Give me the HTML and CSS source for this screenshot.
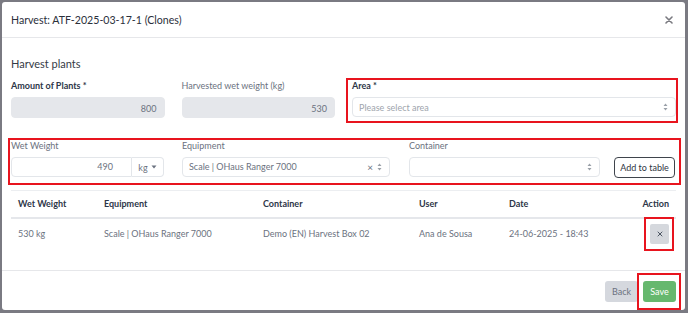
FILE: index.html
```html
<!DOCTYPE html>
<html>
<head>
<meta charset="utf-8">
<link rel="stylesheet" href="styles.css">
</head>
<body>
<div class="modal">
  <div class="modal-header">
    <h1 class="title">Harvest: ATF-2025-03-17-1 (Clones)</h1>
    <button class="close" aria-label="Close">
      <svg width="8" height="8" viewBox="0 0 8 8"><path d="M1 1L7 7M7 1L1 7" stroke="#7a7a80" stroke-width="1.6" stroke-linecap="round"/></svg>
    </button>
  </div>
  <div class="modal-body">
    <h2 class="section">Harvest plants</h2>
    <div class="row1">
      <div class="field">
        <label class="lbl strong">Amount of Plants *</label>
        <div class="input disabled">800</div>
      </div>
      <div class="field">
        <label class="lbl">Harvested wet weight (kg)</label>
        <div class="input disabled">530</div>
      </div>
      <div class="field span2">
        <label class="lbl strong">Area *</label>
        <div class="select placeholder">
          <span>Please select area</span>
          <svg class="updown" width="5" height="8" viewBox="0 0 5 8"><path d="M2.5 0.5L4.5 3H0.5Z M2.5 7.5L4.5 5H0.5Z" fill="#9aa0a8"/></svg>
        </div>
      </div>
    </div>
    <div class="row2">
      <div class="field f-wet">
        <label class="lbl">Wet Weight</label>
        <div class="group">
          <div class="input num">490</div>
          <div class="unit">kg <svg width="6" height="4" viewBox="0 0 6 4"><path d="M0.5 0.5H5.5L3 3.5Z" fill="#6b7280"/></svg></div>
        </div>
      </div>
      <div class="field f-eq">
        <label class="lbl">Equipment</label>
        <div class="select">
          <span>Scale | OHaus Ranger 7000</span>
          <span class="tools"><span class="clear">×</span><svg class="updown" width="5" height="8" viewBox="0 0 5 8"><path d="M2.5 0.5L4.5 3H0.5Z M2.5 7.5L4.5 5H0.5Z" fill="#9aa0a8"/></svg></span>
        </div>
      </div>
      <div class="field f-cont">
        <label class="lbl">Container</label>
        <div class="select">
          <span></span>
          <svg class="updown" width="5" height="8" viewBox="0 0 5 8"><path d="M2.5 0.5L4.5 3H0.5Z M2.5 7.5L4.5 5H0.5Z" fill="#9aa0a8"/></svg>
        </div>
      </div>
      <button class="btn-add">Add to table</button>
    </div>
    <table class="tbl">
      <thead>
        <tr>
          <th class="c1">Wet Weight</th>
          <th class="c2">Equipment</th>
          <th class="c3">Container</th>
          <th class="c4">User</th>
          <th class="c5">Date</th>
          <th class="c6">Action</th>
        </tr>
      </thead>
      <tbody>
        <tr>
          <td>530 kg</td>
          <td>Scale | OHaus Ranger 7000</td>
          <td>Demo (EN) Harvest Box 02</td>
          <td>Ana de Sousa</td>
          <td>24-06-2025 - 18:43</td>
          <td class="c6"><button class="btn-del"><svg width="6" height="6" viewBox="0 0 6 6"><path d="M1 1L5 5M5 1L1 5" stroke="#4b5563" stroke-width="1" stroke-linecap="round"/></svg></button></td>
        </tr>
      </tbody>
    </table>
  </div>
  <div class="modal-footer">
    <button class="btn back">Back</button>
    <button class="btn save">Save</button>
  </div>
  <div class="mark m-area"></div>
  <div class="mark m-row"></div>
  <div class="mark m-del"></div>
  <div class="mark m-save"></div>
</div>
</body>
</html>
```
FILE: styles.css
```css
* { box-sizing: border-box; }
html, body { margin: 0; padding: 0; }
body {
  width: 688px;
  height: 313px;
  overflow: hidden;
  background: #7a7a82;
  font-family: Lato, "Open Sans", sans-serif;
  color: #3b4252;
}
.modal {
  position: relative;
  margin: 2px 0 0 2px;
  width: 683px;
  height: 308px;
  background: #fff;
  border-radius: 3px;
  display: flex;
  flex-direction: column;
}
.modal-header {
  height: 36px;
  border-bottom: 1px solid #e6e7ea;
  display: flex;
  align-items: center;
  justify-content: space-between;
  padding: 0 12px 0 9px;
}
.title {
  margin: 0;
  font-size: 10.6px;
  font-weight: 400;
  color: #2b303b;
}
.close {
  border: 0;
  background: none;
  padding: 0;
  width: 8px;
  height: 8px;
  display: flex;
}
.modal-body {
  flex: 1;
  padding: 0 9px 0 9px;
}
.section {
  margin: 19px 0 0;
  font-size: 11px;
  line-height: 14px;
  font-weight: 400;
  color: #343a46;
}
.row1 {
  display: grid;
  grid-template-columns: repeat(4, 1fr);
  column-gap: 17px;
  margin-top: 9px;
}
.span2 { grid-column: span 2; }
.field { display: flex; flex-direction: column; }
.lbl {
  font-size: 9px;
  line-height: 12px;
  color: #6b7280;
  margin-bottom: 5px;
  white-space: nowrap;
}
.lbl.strong { font-weight: 700; color: #2d3648; }
.input {
  height: 21px;
  border-radius: 4px;
  font-size: 9px;
  line-height: 21px;
  padding: 0 7px;
  text-align: right;
  color: #6b7280;
  border: 1px solid #e3e6ea;
  background: #fff;
}
.input.disabled {
  background: #e5e7eb;
  border-color: #e5e7eb;
}
.select {
  height: 21px;
  border: 1px solid #e3e6ea;
  border-radius: 4px;
  display: flex;
  align-items: center;
  justify-content: space-between;
  padding: 0 7px 0 6px;
  font-size: 9px;
  color: #6b7280;
  background: #fff;
}
.select.placeholder { color: #a0a5ad; }
.row1 .select { height: 20px; }
.tools { display: flex; align-items: center; gap: 4px; }
.clear { font-size: 10px; color: #6b7280; line-height: 1; }
.row2 {
  display: flex;
  align-items: flex-end;
  margin-top: 22px;
}
.f-wet { width: 153px; }
.f-eq { width: 208px; margin-left: 18px; }
.f-cont { width: 191px; margin-left: 19px; }
.row2 .input, .row2 .select { height: 20px; line-height: 18px; }
.group { display: flex; }
.group .input.num {
  width: 121px;
  border-radius: 4px 0 0 4px;
  padding-right: 18px;
}
.unit {
  width: 32px;
  height: 20px;
  border: 1px solid #e3e6ea;
  border-left: 0;
  border-radius: 0 4px 4px 0;
  display: flex;
  align-items: center;
  justify-content: center;
  gap: 3px;
  font-size: 9px;
  color: #6b7280;
}
.btn-add {
  margin-left: 14px;
  width: 61px;
  height: 21px;
  border: 1px solid #3f444c;
  border-radius: 4px;
  background: #fff;
  font-family: inherit;
  font-size: 9px;
  color: #2f3542;
  padding: 0;
  margin-bottom: -1px;
}
.tbl {
  width: 100%;
  border-collapse: collapse;
  margin-top: 13px;
  font-size: 9px;
  table-layout: fixed;
}
.tbl thead tr { border-top: 1px solid #eceef1; border-bottom: 2px solid #e5e7eb; }
.tbl th {
  height: 27px;
  text-align: left;
  font-weight: 700;
  color: #2d3648;
  padding: 0 7px;
  white-space: nowrap;
}
.tbl td {
  height: 31px;
  color: #6b7280;
  padding: 0 7px;
  white-space: nowrap;
}
.c1 { width: 86px; }
.c2 { width: 159px; }
.c3 { width: 156px; }
.c4 { width: 90px; }
.c5 { width: 110px; }
.tbl .c6 { text-align: right; }
.btn-del {
  width: 19px;
  height: 20px;
  border: 0;
  border-radius: 2px;
  background: #d5d8dd;
  padding: 0;
  display: inline-flex;
  align-items: center;
  justify-content: center;
  vertical-align: middle;
}
.modal-footer {
  height: 40px;
  border-top: 1px solid #e6e7ea;
  display: flex;
  justify-content: flex-end;
  align-items: flex-start;
  gap: 5px;
  padding: 10px 9px 0 0;
}
.btn {
  height: 21px;
  border: 0;
  border-radius: 3px;
  font-family: inherit;
  font-size: 9px;
  padding: 0;
  width: 33px;
}
.back { background: #d5d8de; color: #6b7280; }
.save { background: #66b86e; color: #fff; }
.mark {
  position: absolute;
  border: 2px solid #e8141e;
  pointer-events: none;
}
.m-area { left: 344px; top: 76px; width: 332px; height: 45px; }
.m-row { left: 6px; top: 136px; width: 673px; height: 47px; }
.m-del { left: 642px; top: 215px; width: 30px; height: 34px; }
.m-save { left: 635px; top: 271px; width: 44px; height: 37px; }
```
